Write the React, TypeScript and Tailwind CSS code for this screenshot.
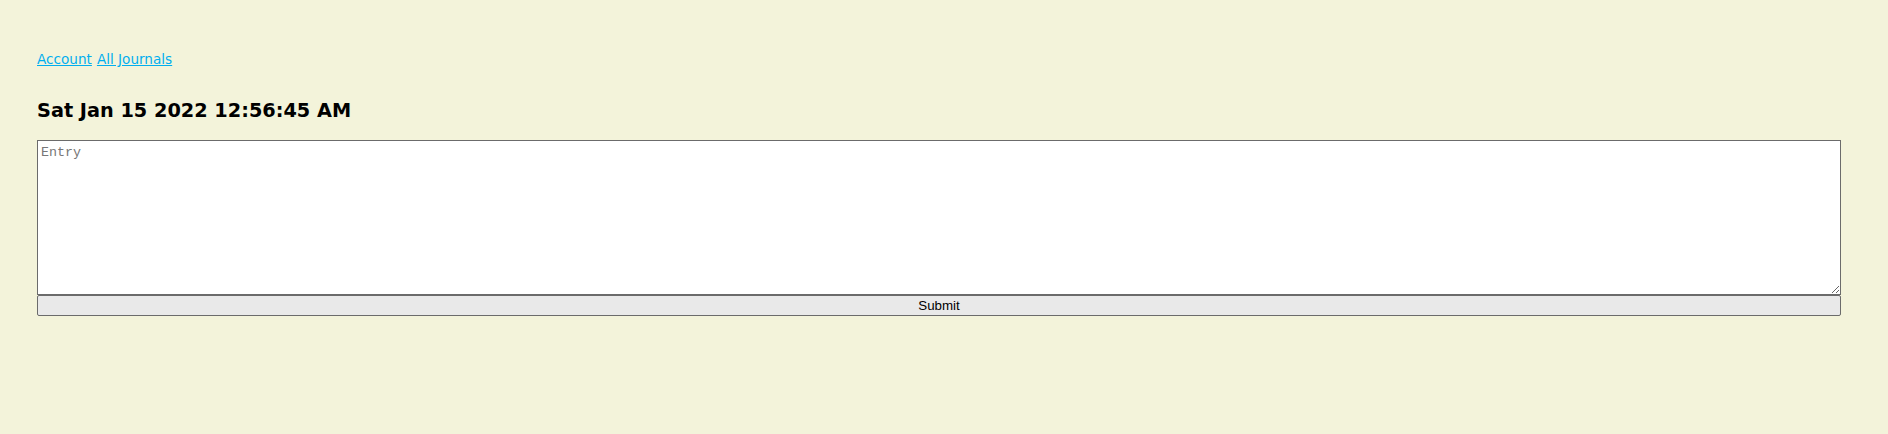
export default function App() {
  return (
    <div className="min-h-[434px] w-full bg-[#f3f3da] px-[37px] pt-[50px] font-['DejaVu_Sans',sans-serif] text-black">
      <nav className="flex gap-[5px] text-[13.6px] leading-[18px]">
        <a href="#" className="text-[#00aeef] underline">Account</a>
        <a href="#" className="text-[#00aeef] underline">All Journals</a>
      </nav>
      <h2 className="mt-[31px] text-[19.3px] font-bold leading-[24px]">Sat Jan 15 2022 12:56:45 AM</h2>
      <form className="mt-[17px] flex w-[1804px] flex-col">
        <textarea
          placeholder="Entry"
          className="block h-[155px] w-full resize border border-[#6b6b6b] bg-white px-[3px] py-[2px] font-['Liberation_Mono',monospace] text-[13.33px] placeholder:text-[#777777]"
        />
        <button
          type="button"
          className="h-[21px] w-full rounded-[2px] border border-[#6b6b6b] bg-[#e9e9e9] font-['Liberation_Sans',sans-serif] text-[13.33px] leading-[19px]"
        >
          Submit
        </button>
      </form>
    </div>
  );
}
